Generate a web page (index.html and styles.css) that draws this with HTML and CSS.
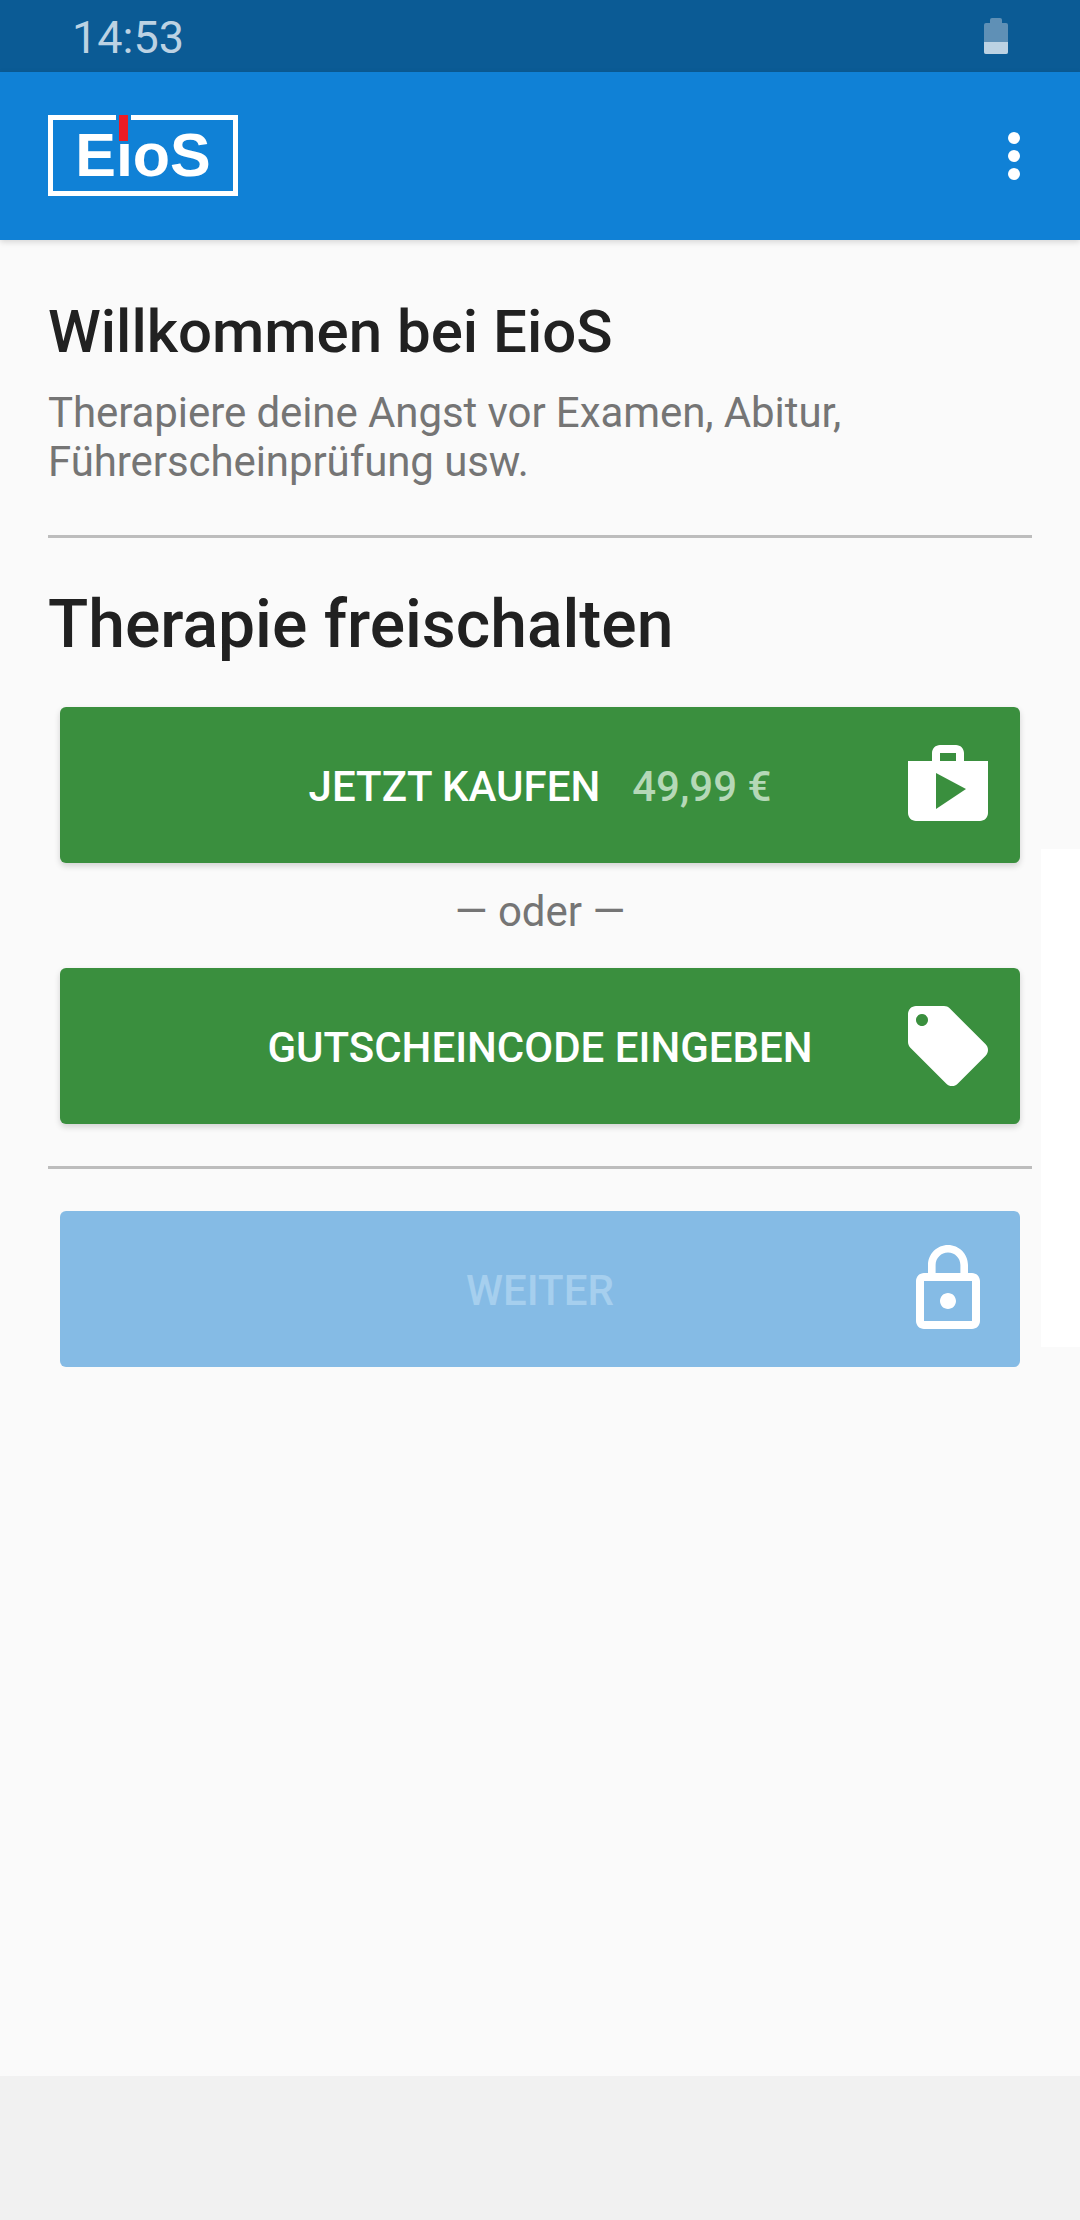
FILE: index.html

```html
<!DOCTYPE html>
<html lang="de">
<head>
    <meta charset="UTF-8">
    <meta name="viewport" content="width=device-width, initial-scale=1.0">
    <title>EioS</title>
    <link rel="stylesheet" href="styles.css">
</head>
<body>
    <div class="screen">
        <div class="statusbar">
            <span class="time">14:53</span>
            <div class="battery"><div class="battery-tip"></div><div class="battery-body"><div class="battery-level"></div></div></div>
        </div>

        <header class="appbar">
            <div class="logo">
                <span class="logo-text">EioS</span>
                <span class="logo-mark"></span>
            </div>
            <div class="menu"><span></span><span></span><span></span></div>
        </header>

        <main class="content">
            <h1 class="title">Willkommen bei EioS</h1>
            <p class="intro">Therapiere deine Angst vor Examen, Abitur, Führerscheinprüfung usw.</p>
            <hr class="divider first">

            <h2 class="headline">Therapie freischalten</h2>

            <div class="btn green">
                <span>JETZT KAUFEN</span>
                <span class="price">49,99 €</span>
                <svg class="btn-icon" viewBox="0 0 24 24"><path d="M16 6V4c0-1.11-.89-2-2-2h-4c-1.11 0-2 .89-2 2v2H2v13c0 1.11.89 2 2 2h16c1.11 0 2-.89 2-2V6h-6zm-6-2h4v2h-4V4zM9 18V9l7.5 4.02L9 18z"/></svg>
            </div>

            <p class="or">— oder —</p>

            <div class="btn green">
                <span>GUTSCHEINCODE EINGEBEN</span>
                <svg class="btn-icon" viewBox="0 0 24 24"><path d="M21.41 11.58l-9-9C12.05 2.22 11.55 2 11 2H4c-1.1 0-2 .9-2 2v7c0 .55.22 1.05.59 1.42l9 9c.36.36.86.58 1.41.58.55 0 1.05-.22 1.41-.59l7-7c.37-.36.59-.86.59-1.41 0-.55-.23-1.06-.59-1.42zM5.5 7C4.67 7 4 6.33 4 5.5S4.67 4 5.5 4 7 4.67 7 5.5 6.33 7 5.5 7z"/></svg>
            </div>

            <hr class="divider second">

            <div class="btn disabled">
                <span>WEITER</span>
                <svg class="btn-icon" viewBox="0 0 24 24"><path d="M12 17c1.1 0 2-.9 2-2s-.9-2-2-2-2 .9-2 2 .9 2 2 2zm6-9h-1V6c0-2.76-2.24-5-5-5S7 3.24 7 6v2H6c-1.1 0-2 .9-2 2v10c0 1.1.9 2 2 2h12c1.1 0 2-.9 2-2V10c0-1.1-.9-2-2-2zM8.9 6c0-1.71 1.39-3.1 3.1-3.1s3.1 1.39 3.1 3.1v2H8.9V6zM18 20H6V10h12v10z"/></svg>
            </div>

            <div class="side-strip"></div>
        </main>

        <div class="navspace"></div>
    </div>
</body>
</html>
```

FILE: styles.css

```css
* {
    box-sizing: border-box;
}

body {
    margin: 0;
    font-family: Roboto, sans-serif;
    background-color: #fafafa;
}

.screen {
    display: flex;
    flex-direction: column;
    height: 2220px;
}

.statusbar {
    display: flex;
    justify-content: space-between;
    align-items: center;
    height: 72px;
    padding: 0 72px;
    background-color: #0b5b95;
}

.time {
    margin-top: 3px;
    font-size: 45px;
    color: #bcd2e3;
}

.battery {
    width: 24px;
}

.battery-tip {
    width: 12px;
    height: 5px;
    margin: 0 auto;
    border-radius: 2px 2px 0 0;
    background-color: #5f90b6;
}

.battery-body {
    display: flex;
    align-items: flex-end;
    height: 31px;
    border-radius: 2px;
    background-color: #5f90b6;
    overflow: hidden;
}

.battery-level {
    width: 100%;
    height: 12px;
    background-color: #bcd2e3;
}

.appbar {
    display: flex;
    justify-content: space-between;
    align-items: center;
    height: 168px;
    padding: 0 60px 0 48px;
    background-color: #1081d6;
    box-shadow: 0 2px 6px rgba(0, 0, 0, 0.15);
    position: relative;
}

.logo {
    position: relative;
    width: 190px;
    height: 81px;
    margin-bottom: 1px;
    border: 5px solid #fff;
    text-align: center;
}

.logo-text {
    display: block;
    font-family: "Liberation Sans", Arial, sans-serif;
    font-weight: bold;
    font-size: 61px;
    line-height: 71px;
    color: #fff;
}

.logo-mark {
    position: absolute;
    top: -5px;
    left: 63px;
    width: 15px;
    height: 26px;
    background-color: #ec1c24;
    border-left: 3px solid #1081d6;
    border-right: 3px solid #1081d6;
}

.menu {
    display: flex;
    flex-direction: column;
    gap: 6px;
}

.menu span {
    width: 12px;
    height: 12px;
    border-radius: 50%;
    background-color: #fff;
}

.content {
    position: relative;
    flex: 1;
    padding: 0 48px;
}

.title {
    margin: 56px 0 0;
    font-size: 60px;
    line-height: 72px;
    font-weight: 500;
    color: #212121;
}

.intro {
    margin: 20px 0 0;
    font-size: 42px;
    line-height: 49px;
    letter-spacing: -0.08px;
    color: #757575;
}

.divider {
    height: 3px;
    margin: 0;
    border: 0;
    background-color: #bdbdbd;
}

.divider.first {
    margin-top: 49px;
}

.divider.second {
    margin: 42px 0;
}

.headline {
    margin: 47px 0 0;
    font-size: 66px;
    line-height: 80px;
    font-weight: 500;
    color: #212121;
}

.btn {
    position: relative;
    display: flex;
    justify-content: center;
    align-items: center;
    gap: 32px;
    height: 156px;
    margin: 0 12px;
    padding-top: 2px;
    border-radius: 6px;
    font-size: 42px;
    font-weight: 500;
}

.btn.green {
    margin-top: 42px;
    background-color: #3a8f3e;
    color: #fff;
    box-shadow: 0 3px 6px rgba(0, 0, 0, 0.16);
}

.btn.green ~ .btn.green {
    margin-top: 0;
}

.btn.disabled {
    background-color: #85bbe5;
    color: #a6cfee;
}

.price {
    color: #b5d8b7;
}

.btn-icon {
    position: absolute;
    top: 30px;
    right: 24px;
    width: 96px;
    height: 96px;
    fill: #fff;
}

.or {
    margin: 0;
    height: 105px;
    line-height: 97px;
    text-align: center;
    font-size: 42px;
    color: #757575;
}

.side-strip {
    position: absolute;
    top: 609px;
    right: 0;
    width: 39px;
    height: 498px;
    background-color: #fff;
}

.navspace {
    height: 144px;
    background-color: #f1f1f1;
}
```
